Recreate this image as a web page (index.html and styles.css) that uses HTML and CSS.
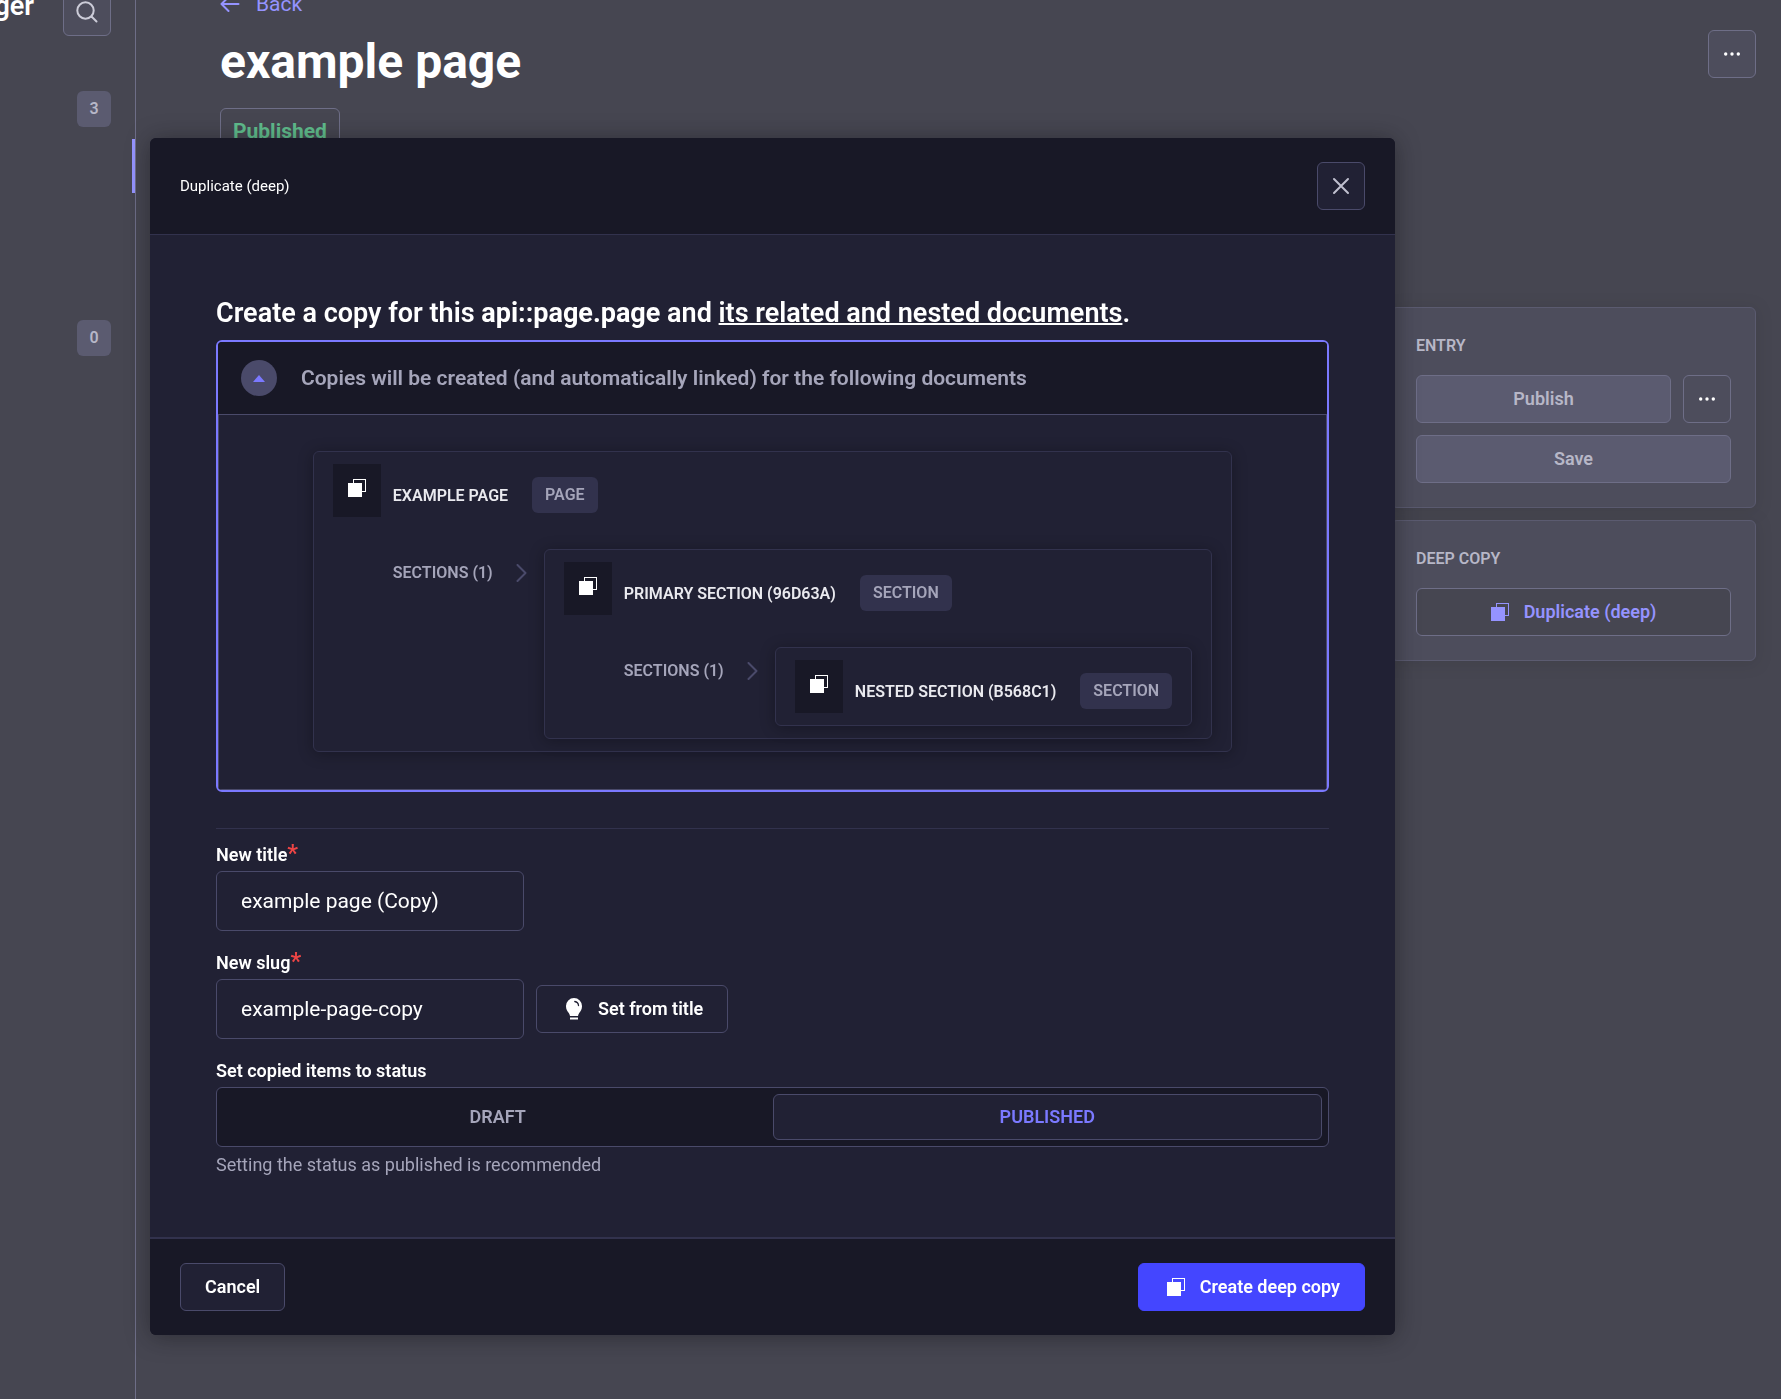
FILE: index.html
```html
<!DOCTYPE html>
<html lang="en">
<head>
<meta charset="utf-8">
<title>Duplicate (deep)</title>
<link rel="stylesheet" href="styles.css">
</head>
<body>
<svg width="0" height="0" class="sprite" aria-hidden="true">
  <symbol id="copy" viewBox="0 0 18 18">
    <rect x="5.5" y="0.5" width="12" height="12" fill="none" stroke="currentColor"/>
    <rect x="0" y="4" width="14" height="14" fill="currentColor"/>
  </symbol>
  <symbol id="dots" viewBox="0 0 18 18">
    <g fill="currentColor"><circle cx="2.7" cy="9" r="1.7"/><circle cx="9" cy="9" r="1.7"/><circle cx="15.3" cy="9" r="1.7"/></g>
  </symbol>
  <symbol id="chevron" viewBox="0 0 12 18">
    <path d="M1.5 1l8 8-8 8" fill="none" stroke="currentColor" stroke-width="2" stroke-linecap="round" stroke-linejoin="round"/>
  </symbol>
</svg>

<div class="app">
  <nav class="sidebar" aria-label="Content types">
    <div class="sidebar-head">
      <span class="sidebar-title">Content Manager</span>
      <button class="icon-btn" type="button" aria-label="Search">
        <svg width="24" height="24" viewBox="0 0 24 24" fill="none" stroke="currentColor" stroke-width="2" stroke-linecap="round"><circle cx="10.5" cy="10.5" r="8.2"/><path d="M16.5 16.5l5 5"/></svg>
      </button>
    </div>
    <div class="nav-count"><span class="count">3</span></div>
    <div class="nav-active"></div>
    <div class="nav-count"><span class="count">0</span></div>
  </nav>

  <main class="main">
    <header class="page-head">
      <div>
        <a class="back" href="#">
          <svg width="20" height="18" viewBox="0 0 20 18" fill="none" stroke="currentColor" stroke-width="2" stroke-linecap="round" stroke-linejoin="round"><path d="M18.500 9H2M8.500 2L1.500 9l7 7"/></svg>
          Back
        </a>
        <h1 class="page-title">example page</h1>
        <span class="status">Published</span>
      </div>
      <button class="icon-btn" type="button" aria-label="More actions"><svg width="18" height="18"><use href="#dots"/></svg></button>
    </header>
    <aside class="side">
      <section class="panel">
        <h2 class="panel-title">ENTRY</h2>
        <div class="panel-row">
          <button class="btn btn-disabled" type="button" disabled>Publish</button>
          <button class="icon-btn" type="button" aria-label="More document actions"><svg width="18" height="18"><use href="#dots"/></svg></button>
        </div>
        <button class="btn btn-disabled" type="button" disabled>Save</button>
      </section>
      <section class="panel">
        <h2 class="panel-title">DEEP COPY</h2>
        <button class="btn btn-secondary" type="button"><svg width="18" height="18"><use href="#copy"/></svg>Duplicate (deep)</button>
      </section>
    </aside>
  </main>
</div>

<div class="overlay">
  <form class="modal" role="dialog" aria-labelledby="modal-title">
    <header class="modal-head">
      <h2 class="modal-title" id="modal-title">Duplicate (deep)</h2>
      <button class="icon-btn" type="button" aria-label="Close">
        <svg width="18" height="18" viewBox="0 0 18 18" fill="none" stroke="currentColor" stroke-width="2" stroke-linecap="round"><path d="M2 2l14 14M16 2L2 16"/></svg>
      </button>
    </header>

    <div class="modal-body">
      <h3 class="intro">Create a copy for this <strong>api::page.page</strong> and <u>its related and nested documents</u>.</h3>

      <div class="accordion">
        <button class="accordion-head" type="button" aria-expanded="true" aria-controls="tree">
          <span class="toggle"><svg width="12" height="7" viewBox="0 0 12 7"><path d="M6 0l6 7H0z" fill="currentColor"/></svg></span>
          Copies will be created (and automatically linked) for the following documents
        </button>
        <div class="accordion-body" id="tree">
          <article class="node">
            <div class="node-head"><span class="tile"><svg width="18" height="18"><use href="#copy"/></svg></span><span class="node-name">EXAMPLE PAGE</span><span class="tag">PAGE</span></div>
            <div class="node-children">
              <div class="relation">SECTIONS (1)<svg width="12" height="18"><use href="#chevron"/></svg></div>
              <article class="node">
                <div class="node-head"><span class="tile"><svg width="18" height="18"><use href="#copy"/></svg></span><span class="node-name">PRIMARY SECTION (96D63A)</span><span class="tag">SECTION</span></div>
                <div class="node-children">
                  <div class="relation">SECTIONS (1)<svg width="12" height="18"><use href="#chevron"/></svg></div>
                  <article class="node">
                    <div class="node-head"><span class="tile"><svg width="18" height="18"><use href="#copy"/></svg></span><span class="node-name">NESTED SECTION (B568C1)</span><span class="tag">SECTION</span></div>
                  </article>
                </div>
              </article>
            </div>
          </article>
        </div>
      </div>

      <hr class="rule">

      <div class="fields">
        <div class="field">
          <label class="label" for="title">New title<span class="required">*</span></label>
          <input class="input" id="title" type="text" value="example page (Copy)">
        </div>
        <div class="field">
          <label class="label" for="slug">New slug<span class="required">*</span></label>
          <div class="input-row">
            <input class="input" id="slug" type="text" value="example-page-copy">
            <button class="btn btn-tertiary btn-icon" type="button">
              <svg width="18" height="22" viewBox="0 0 18 22"><path d="M9 0a8 8 0 0 1 8 8.2c0 3.200-1.500 5-2.800 6.800-.7 1-.9 2-1.200 3H5c-.3-1-.5-2-1.200-3C2.500 13.200 1 11.400 1 8.200A8 8 0 0 1 9 0z" fill="currentColor"/><path d="M9.800 3.500a4.500 4.500 0 0 1 3.700 4" fill="none" stroke="#212134" stroke-width="1.300" stroke-linecap="round"/><path d="M5 19.500h8v2H5z" fill="currentColor"/></svg>
              Set from title
            </button>
          </div>
        </div>
        <fieldset class="field">
          <legend class="label">Set copied items to status</legend>
          <div class="switch">
            <label class="switch-option"><input type="radio" name="status" value="draft"><span>DRAFT</span></label>
            <label class="switch-option"><input type="radio" name="status" value="published" checked><span>PUBLISHED</span></label>
          </div>
          <p class="hint">Setting the status as published is recommended</p>
        </fieldset>
      </div>
    </div>

    <footer class="modal-foot">
      <button class="btn btn-tertiary" type="button">Cancel</button>
      <button class="btn btn-primary btn-icon" type="submit"><svg width="18" height="18"><use href="#copy"/></svg>Create deep copy</button>
    </footer>
  </form>
</div>
</body>
</html>
```

FILE: styles.css
```css
:root {
  --bg: #181826;
  --surface: #212134;
  --line: #32324d;
  --line-strong: #4a4a6a;
  --muted: #a5a5ba;
  --accent: #7b79ff;
  --radius: 6px;
}

* { box-sizing: border-box; }

body {
  margin: 0;
  background: var(--bg);
  color: #fff;
  font: 18px/24px Roboto, "Liberation Sans", sans-serif;
}

h1, h2, h3, p { margin: 0; }
button, input { font: inherit; color: inherit; }
svg { display: block; flex: none; }
.sprite { position: absolute; }

/* Page behind the dialog */
.app {
  display: grid;
  grid-template-columns: 136px 1fr;
  min-height: 100vh;
  overflow: hidden;
}

.sidebar {
  border-right: 1px solid var(--line-strong);
  overflow: hidden;
}

.sidebar-head {
  display: flex;
  justify-content: flex-end;
  align-items: flex-start;
  gap: 29px;
  margin-top: -12px;
  padding-right: 24px;
}

.sidebar-title {
  font-size: 27px;
  line-height: 36px;
  font-weight: 600;
  white-space: nowrap;
}

.nav-count {
  display: flex;
  justify-content: flex-end;
  padding: 55px 24px 12px 0;
}

.nav-active {
  height: 54px;
  border-right: 3px solid var(--accent);
}

.nav-active + .nav-count { padding-top: 127px; }

.count {
  min-width: 34px;
  padding: 6px;
  border-radius: var(--radius);
  background: var(--line);
  color: var(--muted);
  font-size: 16px;
  font-weight: 600;
  text-align: center;
}

.main { padding: 0 25px 48px 84px; }

.page-head {
  display: flex;
  justify-content: space-between;
  align-items: flex-start;
  margin-top: -8px;
}

.page-head .icon-btn { margin-top: 38px; }

.back {
  display: flex;
  align-items: center;
  gap: 16px;
  color: var(--accent);
  font-size: 21px;
  text-decoration: none;
}

.page-title {
  margin: 16px 0;
  font-size: 48px;
  line-height: 60px;
  font-weight: 700;
}

.status {
  display: inline-block;
  padding: 10px 12px;
  border: 1px solid var(--line-strong);
  border-radius: var(--radius);
  color: #38ac70;
  font-size: 21px;
  font-weight: 700;
}

.side {
  display: flex;
  flex-direction: column;
  gap: 12px;
  width: 365px;
  margin: 153px 0 0 auto;
}

.panel {
  display: flex;
  flex-direction: column;
  gap: 12px;
  padding: 24px;
  border: 1px solid var(--line);
  border-radius: var(--radius);
  background: var(--surface);
  box-shadow: 0 2px 15px rgba(3, 3, 5, 0.3);
}

.panel-title {
  margin-bottom: 4px;
  color: var(--muted);
  font-size: 16px;
  line-height: 27px;
  font-weight: 600;
}

.panel-row { display: flex; gap: 12px; }
.panel-row .btn { flex: 1; }

/* Buttons */
.icon-btn {
  display: flex;
  align-items: center;
  justify-content: center;
  flex: none;
  width: 48px;
  height: 48px;
  padding: 0;
  border: 1px solid var(--line-strong);
  border-radius: var(--radius);
  background: var(--surface);
}

.sidebar .icon-btn, .modal .icon-btn { color: #c0c0cf; }

.btn {
  display: flex;
  align-items: center;
  justify-content: center;
  gap: 15px;
  height: 48px;
  padding: 0 24px;
  border: 1px solid var(--line-strong);
  border-radius: var(--radius);
  font-weight: 600;
}

.btn-disabled { background: var(--line); color: var(--muted); }
.btn-secondary { background: var(--bg); color: var(--accent); }
.btn-tertiary { background: var(--surface); }
.btn-primary { border-color: #4446ff; background: #4446ff; }
.btn-icon { padding-left: 28px; }

/* Dialog */
.overlay {
  position: fixed;
  inset: 0;
  overflow: auto;
  padding: 138px 48px 48px 150px;
  background: rgba(255, 255, 255, 0.2);
}

.modal {
  max-width: 1245px;
  border-radius: var(--radius);
  background: var(--surface);
  box-shadow: 0 2px 24px rgba(3, 3, 5, 0.35);
  overflow: hidden;
}

.modal-head, .modal-foot {
  display: flex;
  align-items: center;
  justify-content: space-between;
  padding: 24px 30px;
  background: var(--bg);
}

.modal-head { border-bottom: 1px solid var(--line); }
.modal-foot { border-top: 2px solid var(--line); }
.modal-title { font-size: 15px; font-weight: 400; }
.modal-body { padding: 61px 66px 60px; }

.intro {
  margin-bottom: 10px;
  font-size: 27px;
  line-height: 34px;
  font-weight: 600;
}

.intro strong { font-weight: 700; }
.intro u { text-decoration-thickness: 2px; }

.accordion {
  border: 2px solid var(--accent);
  border-radius: var(--radius);
  overflow: hidden;
}

.accordion-head {
  display: flex;
  align-items: center;
  gap: 24px;
  width: 100%;
  height: 72px;
  padding: 0 23px;
  border: 0;
  background: var(--bg);
  color: var(--muted);
  font-size: 21px;
  font-weight: 600;
}

.toggle {
  display: flex;
  align-items: center;
  justify-content: center;
  width: 36px;
  height: 36px;
  border-radius: 50%;
  background: var(--line-strong);
  color: var(--accent);
}

.accordion-body {
  display: flex;
  justify-content: center;
  padding: 36px 36px 37px;
  border: 1px solid var(--line-strong);
}

.node {
  padding: 12px 19px;
  border: 1px solid var(--line);
  border-radius: var(--radius);
  background: var(--surface);
  box-shadow: 0 2px 15px rgba(3, 3, 5, 0.3);
  font-size: 16px;
  font-weight: 600;
}

.node-head { display: flex; align-items: center; }

.tile {
  width: 48px;
  height: 53px;
  margin-right: 12px;
  padding: 15px;
  background: var(--bg);
}

.node-name { margin: 10px 24px 0 0; color: #eaeaef; }

.tag {
  margin-top: 8px;
  padding: 6px 13px;
  border-radius: var(--radius);
  background: var(--line);
  color: var(--muted);
}

.node-children {
  display: flex;
  align-items: flex-start;
  gap: 16px;
  margin: 32px 0 0 60px;
}

.relation {
  display: flex;
  align-items: center;
  justify-content: space-between;
  width: 135px;
  padding-top: 12px;
  color: var(--muted);
}

.relation svg { color: var(--line-strong); }

.rule {
  height: 1px;
  margin: 36px 0 14px;
  border: 0;
  background: var(--line);
}

.fields { display: flex; flex-direction: column; gap: 20px; }

.field {
  display: flex;
  flex-direction: column;
  gap: 4px;
  min-width: 0;
  margin: 0;
  padding: 0;
  border: 0;
}

.label { padding: 0; font-weight: 600; }
legend.label { margin-bottom: 4px; }

.required {
  color: #ee4545;
  font-size: 24px;
  line-height: 0;
}

.input {
  width: 308px;
  height: 60px;
  padding: 0 24px;
  border: 1px solid var(--line-strong);
  border-radius: var(--radius);
  background: var(--surface);
  font-size: 21px;
}

.input-row { display: flex; align-items: center; gap: 12px; }

.switch {
  display: flex;
  height: 60px;
  padding: 6px;
  border: 1px solid var(--line-strong);
  border-radius: var(--radius);
  background: var(--bg);
}

.switch-option { display: flex; flex: 1; }

.switch-option input {
  position: absolute;
  opacity: 0;
  pointer-events: none;
}

.switch-option span {
  display: flex;
  flex: 1;
  align-items: center;
  justify-content: center;
  border: 1px solid transparent;
  border-radius: var(--radius);
  color: var(--muted);
  font-weight: 600;
}

.switch-option input:checked + span {
  border-color: var(--line-strong);
  background: var(--surface);
  color: var(--accent);
}

.hint { margin-top: 2px; color: var(--muted); }
```
